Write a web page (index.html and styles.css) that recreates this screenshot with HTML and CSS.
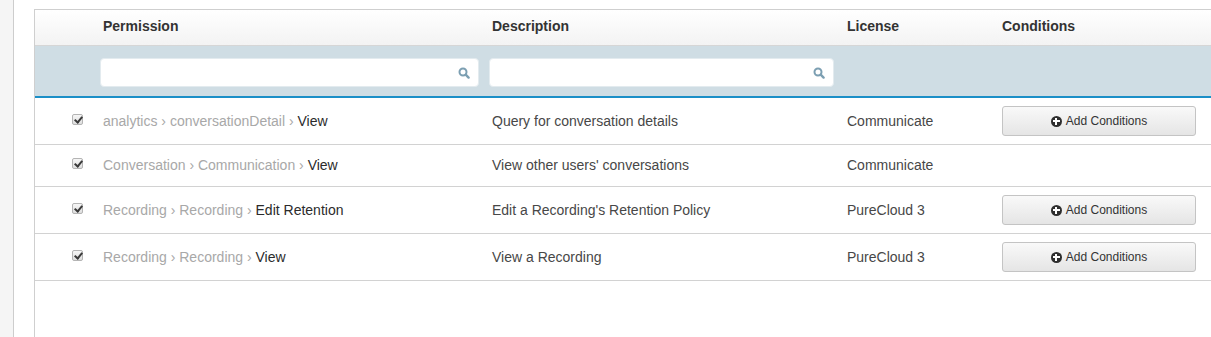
FILE: index.html
```html
<!DOCTYPE html>
<html>
<head>
<meta charset="utf-8">
<link rel="stylesheet" href="styles.css">
</head>
<body>
<div class="page">
  <div class="sidebar"></div>
  <div class="main">
    <div class="frame">
    <table class="perm-table">
      <colgroup>
        <col class="c-check">
        <col class="c-perm">
        <col class="c-desc">
        <col class="c-lic">
        <col class="c-cond">
      </colgroup>
      <thead>
        <tr class="head-row">
          <th></th>
          <th>Permission</th>
          <th>Description</th>
          <th>License</th>
          <th>Conditions</th>
        </tr>
        <tr class="filter-row">
          <td></td>
          <td><div class="search"><input type="text"><svg class="mag" viewBox="0 0 12 12" width="12" height="12"><circle cx="5" cy="5" r="3.5" fill="none" stroke="currentColor" stroke-width="2"/><path d="M7.7 7.7 L10.6 10.6" stroke="currentColor" stroke-width="2.4" stroke-linecap="round"/></svg></div></td>
          <td><div class="search"><input type="text"><svg class="mag" viewBox="0 0 12 12" width="12" height="12"><circle cx="5" cy="5" r="3.5" fill="none" stroke="currentColor" stroke-width="2"/><path d="M7.7 7.7 L10.6 10.6" stroke="currentColor" stroke-width="2.4" stroke-linecap="round"/></svg></div></td>
          <td></td>
          <td></td>
        </tr>
      </thead>
      <tbody>
        <tr>
          <td class="chk"><span class="cb"></span></td>
          <td><span class="crumb">analytics › conversationDetail › </span><span class="leaf">View</span></td>
          <td class="txt">Query for conversation details</td>
          <td class="txt">Communicate</td>
          <td><button class="btn"><span class="plus"></span>Add Conditions</button></td>
        </tr>
        <tr>
          <td class="chk"><span class="cb"></span></td>
          <td><span class="crumb">Conversation › Communication › </span><span class="leaf">View</span></td>
          <td class="txt">View other users' conversations</td>
          <td class="txt">Communicate</td>
          <td></td>
        </tr>
        <tr>
          <td class="chk"><span class="cb"></span></td>
          <td><span class="crumb">Recording › Recording › </span><span class="leaf">Edit Retention</span></td>
          <td class="txt">Edit a Recording's Retention Policy</td>
          <td class="txt">PureCloud 3</td>
          <td><button class="btn"><span class="plus"></span>Add Conditions</button></td>
        </tr>
        <tr>
          <td class="chk"><span class="cb"></span></td>
          <td><span class="crumb">Recording › Recording › </span><span class="leaf">View</span></td>
          <td class="txt">View a Recording</td>
          <td class="txt">PureCloud 3</td>
          <td><button class="btn"><span class="plus"></span>Add Conditions</button></td>
        </tr>
      </tbody>
    </table>
    </div>
  </div>
</div>
</body>
</html>
```

FILE: styles.css
```css
html, body {
  margin: 0;
  padding: 0;
  height: 100%;
  overflow: hidden;
  background: #fff;
  font-family: "Liberation Sans", Arial, sans-serif;
  font-size: 14px;
  color: #444;
}

.page {
  display: flex;
  height: 100%;
}

.sidebar {
  width: 13px;
  flex: none;
  background: #f5f5f5;
  border-right: 1px solid #cdcdcd;
}

.main {
  flex: 1;
  min-width: 0;
  padding: 9px 0 0 20px;
  display: flex;
  flex-direction: column;
}

.frame {
  flex: 1;
  border-top: 1px solid #cfcfcf;
  border-left: 1px solid #cfcfcf;
}

.perm-table {
  table-layout: fixed;
  border-collapse: collapse;
  width: 100%;
}

.c-check { width: 60px; }
.c-perm { width: 389px; }
.c-desc { width: 355px; }
.c-lic { width: 155px; }
.c-cond { width: auto; }

.head-row th {
  text-align: left;
  font-weight: bold;
  font-size: 14px;
  color: #333;
  padding: 7px 8px 9px;
  line-height: 19px;
  background: linear-gradient(#ffffff, #f3f3f3);
  border-bottom: 1px solid #d6d6d6;
}

.filter-row td {
  background: #cfdde4;
  padding: 11px 5px 9px;
  border-bottom: 2px solid #1b8fc7;
  height: 30px;
}

.search {
  position: relative;
  height: 29px;
}

.search input {
  display: block;
  box-sizing: border-box;
  width: 100%;
  height: 29px;
  margin: 0;
  border: 1px solid #e3ebef;
  border-radius: 4px;
  background: #fff;
  outline: none;
}

.mag {
  position: absolute;
  right: 9px;
  top: 9px;
  color: #7c9fb2;
}

tbody td {
  padding: 8px 8px;
  line-height: 25px;
  vertical-align: middle;
  border-bottom: 1px solid #d2d2d2;
  white-space: nowrap;
}

td.chk {
  padding-left: 37px;
  padding-right: 0;
}

.cb {
  display: block;
  box-sizing: border-box;
  width: 11px;
  height: 11px;
  margin-top: -4px;
  border: 1px solid #b4b4b4;
  border-radius: 2px;
  background: linear-gradient(#f6f6f6, #dedede);
  position: relative;
}

.cb::after {
  content: "";
  position: absolute;
  left: 2.5px;
  top: 0px;
  width: 3px;
  height: 6px;
  border-right: 2px solid #3a3a3a;
  border-bottom: 2px solid #3a3a3a;
  transform: rotate(40deg);
}

.crumb {
  color: #a8a8a8;
}

.leaf {
  color: #2b2b2b;
}

.txt {
  color: #474747;
}

.btn {
  display: flex;
  align-items: center;
  justify-content: center;
  gap: 4px;
  box-sizing: border-box;
  width: 194px;
  height: 30px;
  margin: 0;
  padding: 0;
  border: 1px solid #c4c4c4;
  border-radius: 3px;
  background: linear-gradient(#f9f9f9, #e5e5e5);
  font-family: "Liberation Sans", Arial, sans-serif;
  font-size: 12px;
  color: #333;
  line-height: 14px;
}

.plus {
  position: relative;
  display: inline-block;
  width: 11px;
  height: 11px;
  border-radius: 50%;
  background: #2e2e2e;
}

.plus::before,
.plus::after {
  content: "";
  position: absolute;
  background: #fff;
}

.plus::before {
  left: 2px;
  top: 4.5px;
  width: 7px;
  height: 2px;
}

.plus::after {
  left: 4.5px;
  top: 2px;
  width: 2px;
  height: 7px;
}
```
